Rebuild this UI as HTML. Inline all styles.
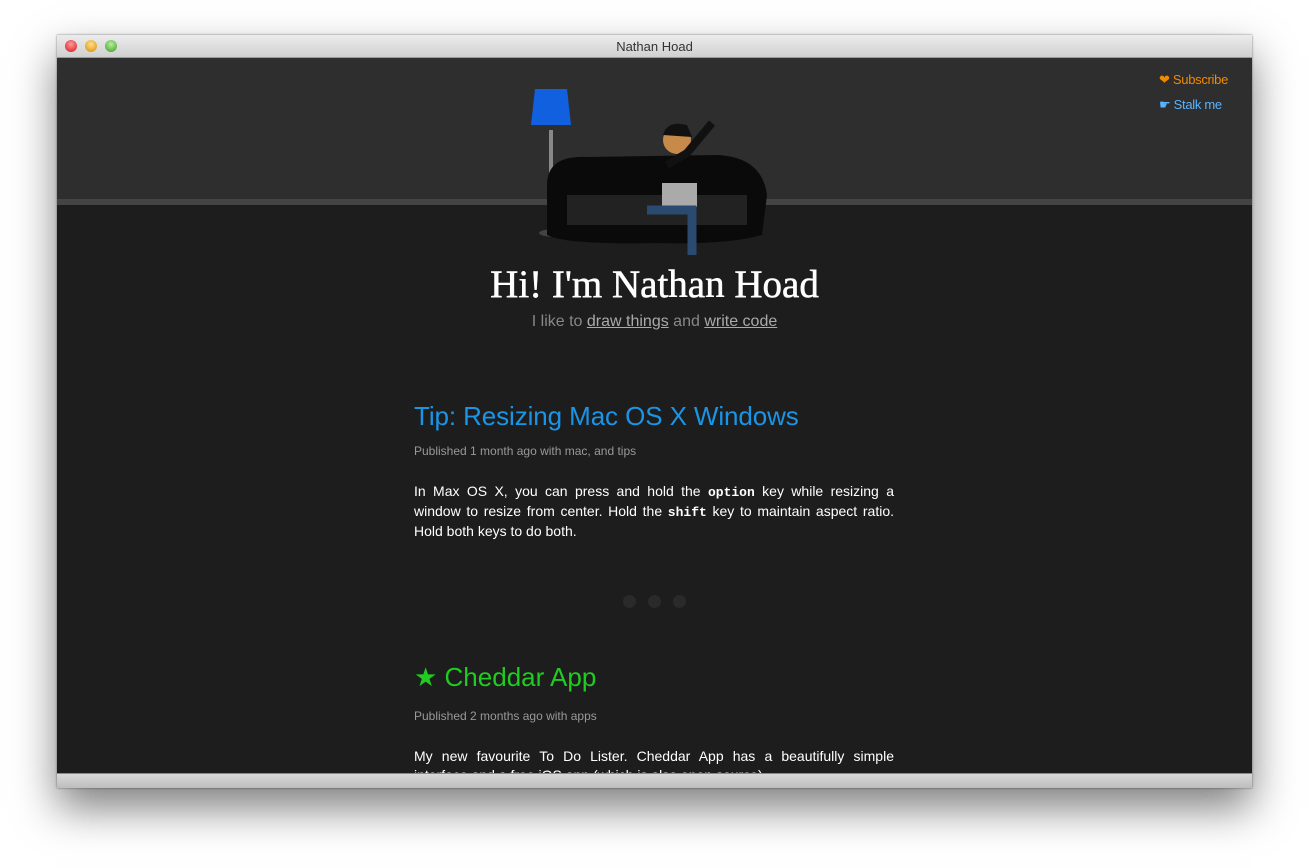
<!DOCTYPE html>
<html><head><meta charset="utf-8"><style>
*{margin:0;padding:0;box-sizing:border-box}
body{width:1309px;height:868px;background:#fff;position:relative;overflow:hidden;font-family:"Liberation Sans",Arial,sans-serif}
.win{position:absolute;left:57px;top:35px;width:1195px;height:753px;box-shadow:0 20px 40px rgba(0,0,0,.5),0 0 2px rgba(0,0,0,.5);background:#1d1d1d;overflow:hidden}
.tb{height:23px;background:linear-gradient(#ececec,#d0d0d0);border-bottom:1px solid #999;text-align:center;font-size:13px;line-height:23px;color:#333;position:relative}
.dot{position:absolute;top:5px;width:12px;height:12px;border-radius:50%}
.hdr{position:absolute;top:23px;left:0;right:0;height:141px;background:#2e2e2e}
.stripe{position:absolute;top:164px;left:0;right:0;height:6px;background:#444}
.bb{position:absolute;bottom:0;left:0;right:0;height:15px;background:linear-gradient(#d8d8d8,#bdbdbd);border-top:1px solid #888}
a{color:#aaa;text-decoration:underline}
.col{position:absolute;left:357px;width:480px}
.meta{font-size:12px;color:#999}
.p{font-size:14px;color:#fff;line-height:19px;text-align:justify}
code{font-family:"Liberation Mono",monospace;font-weight:bold;font-size:13px}
.l1{display:block;text-align-last:justify}
</style></head><body>
<div class="win">
<div class="tb">Nathan Hoad
<div class="dot" style="left:8px;background:radial-gradient(circle at 50% 35%,#ff9a9a,#d4141a)"></div>
<div class="dot" style="left:28px;background:radial-gradient(circle at 50% 35%,#ffe08a,#d88a00)"></div>
<div class="dot" style="left:48px;background:radial-gradient(circle at 50% 35%,#b8f0a0,#3a9a20)"></div>
</div>
<div class="hdr"></div><div class="stripe"></div>
<svg style="position:absolute;left:470px;top:50px" width="250" height="170">
<rect x="22" y="45" width="4" height="95" fill="#888"/>
<path d="M8 4 H40 L44 40 H4 Z" fill="#1060e0"/>
<ellipse cx="30" cy="148" rx="18" ry="4" fill="#444"/>
<path d="M20 100 Q20 70 60 72 L190 70 Q235 72 240 110 L235 150 Q200 160 130 158 Q40 160 20 150 Z" fill="#0a0a0a"/>
<path d="M40 110 H220 V140 H40Z" fill="#222"/>
<circle cx="150" cy="55" r="14" fill="#c88a4a"/>
<path d="M136 50 Q140 35 160 40 L165 52 Z" fill="#111"/>
<path d="M140 80 L160 68 L185 38" stroke="#111" stroke-width="8" fill="none"/>
<rect x="135" y="98" width="35" height="24" fill="#aaa"/>
<path d="M120 125 H165 V190" stroke="#2a4a70" stroke-width="9" fill="none"/>
</svg>
<div style="position:absolute;right:24px;top:32px;font-size:13px;line-height:25px;letter-spacing:-0.3px">
<div style="color:#f08a00">❤ Subscribe</div><div style="color:#58b4ff">☛ Stalk me</div></div>
<div style="position:absolute;left:0;right:0;top:227px;text-align:center;font-family:'Liberation Serif',serif;font-size:39px;color:#fff;-webkit-text-stroke:0.5px #fff">Hi! I'm Nathan Hoad</div>
<div style="position:absolute;left:0;right:0;top:278px;text-align:center;font-size:16px;color:#888">I like to <a>draw things</a> and <a>write code</a></div>
<div class="col" style="top:366px;font-size:26px;color:#1a95e6;letter-spacing:-0.1px">Tip: Resizing Mac OS X Windows</div>
<div class="col meta" style="top:409px">Published 1 month ago with mac, and tips</div>
<div class="col p" style="top:447px">In Max OS X, you can press and hold the <code>option</code> key while resizing a window to resize from center. Hold the <code>shift</code> key to maintain aspect ratio. Hold both keys to do both.</div>
<div style="position:absolute;left:566px;top:560px;display:flex;gap:12px"><i style="width:13px;height:13px;border-radius:50%;background:#2a2a2a"></i><i style="width:13px;height:13px;border-radius:50%;background:#2a2a2a"></i><i style="width:13px;height:13px;border-radius:50%;background:#2a2a2a"></i></div>
<div class="col" style="top:627px;font-size:26px;color:#1fcc1f">★ Cheddar App</div>
<div class="col meta" style="top:674px">Published 2 months ago with apps</div>
<div class="col p" style="top:712px"><span class="l1">My new favourite To Do Lister. Cheddar App has a beautifully simple</span>interface and a free iOS app (which is also open source).</div>
<div class="bb"></div>
</div>
</body></html>
